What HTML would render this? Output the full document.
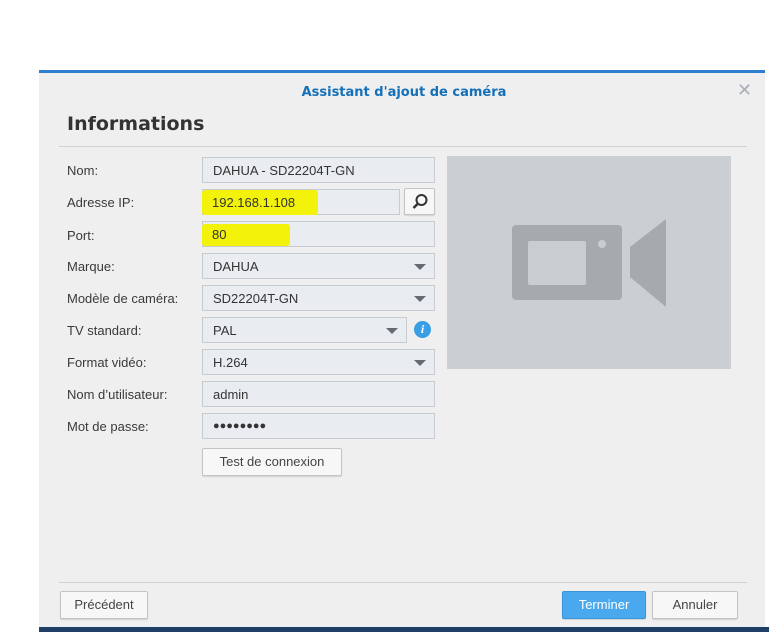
<!DOCTYPE html>
<html><head><meta charset="utf-8"><style>
body{margin:0;width:769px;height:632px;background:#fff;position:relative;overflow:hidden;font-family:"Liberation Sans","DejaVu Sans",sans-serif;}
.dlg{position:absolute;left:39px;top:70px;width:726px;height:562px;background:#efefef;border-top:3px solid #2f7fd0;box-sizing:border-box;}
.bot{position:absolute;left:39px;top:627px;width:730px;height:5px;background:#1f3f66;}
.a{position:absolute;}
.lbl{position:absolute;left:67px;font-size:13px;color:#3a3a3a;}
.f{position:absolute;left:202px;width:233px;height:26px;box-sizing:border-box;border:1px solid #c7cbd0;background:#e9edf1;font-size:13px;color:#333;padding:5px 10px;}
.arr{position:absolute;right:8px;top:10px;width:0;height:0;border-left:6px solid transparent;border-right:6px solid transparent;border-top:6px solid #666a70;}
.btn{position:absolute;height:28px;box-sizing:border-box;border:1px solid #c4c4c4;background:#f7f7f7;font-size:13px;color:#444;text-align:center;line-height:26px;border-radius:2px;box-shadow:0 1px 1px rgba(0,0,0,.12);}
.hl{position:absolute;background:#f2f20a;border-radius:3px;}
</style></head><body>
<div class="dlg"></div>
<div class="bot"></div>
<div class="a" style="left:0;top:85px;width:808px;text-align:center;font-size:13px;font-weight:bold;color:#1570b8;font-family:'DejaVu Sans',sans-serif;">Assistant d'ajout de caméra</div>
<div class="a" style="left:737px;top:80px;font-size:18px;color:#a9b0b8;">✕</div>
<div class="a" style="left:67px;top:113px;font-size:19px;font-weight:bold;color:#333;font-family:'DejaVu Sans',sans-serif;">Informations</div>
<div class="a" style="left:59px;top:146px;width:688px;height:1px;background:#d0d0d0;"></div>

<div class="lbl" style="top:163px">Nom:</div>
<div class="lbl" style="top:195px">Adresse IP:</div>
<div class="lbl" style="top:228px">Port:</div>
<div class="lbl" style="top:259px">Marque:</div>
<div class="lbl" style="top:291px">Modèle de caméra:</div>
<div class="lbl" style="top:323px">TV standard:</div>
<div class="lbl" style="top:355px">Format vidéo:</div>
<div class="lbl" style="top:387px">Nom d’utilisateur:</div>
<div class="lbl" style="top:419px">Mot de passe:</div>

<div class="f" style="top:157px">DAHUA - SD22204T-GN</div>
<div class="f" style="top:189px;width:198px"></div>
<div class="hl" style="left:202px;top:190px;width:116px;height:25px;"></div>
<div class="a" style="left:212px;top:195px;font-size:13px;color:#333;">192.168.1.108</div>
<div class="btn" style="left:404px;top:188px;width:31px;height:27px;">
<svg width="20" height="20" viewBox="0 0 20 20" style="margin-top:3px"><circle cx="11.5" cy="8" r="5" fill="none" stroke="#333" stroke-width="2"/><line x1="8" y1="11.5" x2="3.5" y2="16" stroke="#333" stroke-width="2.5"/></svg></div>
<div class="f" style="top:221px"></div>
<div class="hl" style="left:202px;top:224px;width:88px;height:22px;"></div>
<div class="a" style="left:212px;top:227px;font-size:13px;color:#333;">80</div>
<div class="f" style="top:253px">DAHUA<div class="arr"></div></div>
<div class="f" style="top:285px">SD22204T-GN<div class="arr"></div></div>
<div class="f" style="top:317px;width:205px">PAL<div class="arr"></div></div>
<div class="a" style="left:414px;top:321px;width:17px;height:17px;border-radius:50%;background:#3a9ee4;color:#fff;font-size:12px;font-weight:bold;font-style:italic;text-align:center;line-height:17px;font-family:'Liberation Serif',serif;">i</div>
<div class="f" style="top:349px">H.264<div class="arr"></div></div>
<div class="f" style="top:381px">admin</div>
<div class="f" style="top:413px;font-size:11px;letter-spacing:0;padding-top:6px">●●●●●●●●</div>
<div class="btn" style="left:202px;top:448px;width:140px;">Test de connexion</div>

<div class="a" style="left:447px;top:156px;width:284px;height:213px;background:#cbced2;"></div>
<div class="a" style="left:512px;top:225px;width:110px;height:75px;background:#a6a9ad;border-radius:4px;"></div>
<div class="a" style="left:528px;top:241px;width:58px;height:44px;background:#c9ccd0;border-radius:2px;"></div>
<div class="a" style="left:598px;top:240px;width:8px;height:8px;background:#c9ccd0;border-radius:50%;"></div>
<svg class="a" style="left:628px;top:217px" width="40" height="92"><polygon points="2,30 38,2 38,90 2,60" fill="#a6a9ad"/></svg>

<div class="a" style="left:59px;top:582px;width:688px;height:1px;background:#d0d0d0;"></div>
<div class="btn" style="left:60px;top:591px;width:88px;">Précédent</div>
<div class="btn" style="left:562px;top:591px;width:84px;background:#4aa9ee;border-color:#3a95d8;color:#fff;">Terminer</div>
<div class="btn" style="left:652px;top:591px;width:86px;">Annuler</div>
</body></html>
